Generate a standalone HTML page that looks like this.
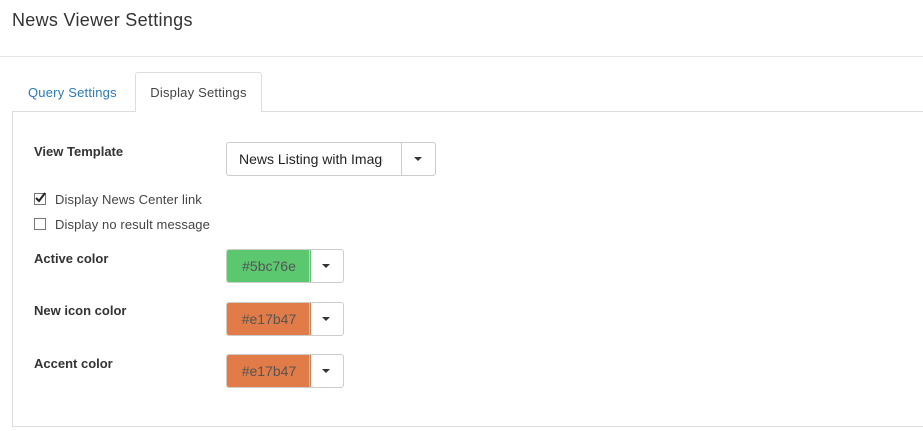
<!DOCTYPE html>
<html><head><style>
body{margin:0;width:923px;height:431px;background:#fff;font-family:"Liberation Sans",sans-serif;color:#333;position:relative;overflow:hidden}
.a{position:absolute}
.t{left:12px;top:10px;font-size:18px;color:#333;letter-spacing:0.3px}
.hl{left:0;top:56px;width:923px;height:1px;background:#e5e5e5}
.tab1{left:28px;top:85px;font-size:13px;color:#2a7ab8;letter-spacing:0.2px}
.tab2{left:135px;top:72px;width:127px;height:40px;border:1px solid #ddd;border-bottom:none;border-radius:3px 3px 0 0;background:#fff;font-size:13px;color:#444;text-align:center;line-height:40px;box-sizing:border-box;z-index:2;letter-spacing:0.2px}
.box{left:12px;top:111px;width:930px;height:316px;border:1px solid #ddd;box-sizing:border-box}
.lb{left:34px;font-size:13px;font-weight:bold;color:#333}
.sel{left:226px;top:142px;width:210px;height:34px;border:1px solid #ccc;border-radius:3px;box-sizing:border-box;font-size:14px;color:#222}
.sel span{position:absolute;left:12px;top:8px;width:144px;overflow:hidden;white-space:nowrap}
.dd{position:absolute;right:0;top:0;width:33px;height:32px;border-left:1px solid #ccc}
.car{position:absolute;left:12px;top:14px;width:0;height:0;border-left:4px solid transparent;border-right:4px solid transparent;border-top:4px solid #333}
.cb{left:34px;width:12px;height:12px;border:1px solid #777;box-sizing:border-box}
.ct{left:55px;font-size:13px;color:#444;letter-spacing:0.1px}
.col{left:226px;width:118px;height:34px;border:1px solid #ccc;border-radius:3px;box-sizing:border-box;overflow:hidden}
.sw{position:absolute;left:0;top:0;width:84px;height:32px;font-size:14px;color:#555;text-align:center;line-height:32px}
.col .dd{width:33px}
</style></head><body>
<div class="a t">News Viewer Settings</div>
<div class="a hl"></div>
<div class="a tab1">Query Settings</div>
<div class="a tab2">Display Settings</div>
<div class="a box"></div>
<div class="a lb" style="top:144px">View Template</div>
<div class="a sel"><span>News Listing with Images</span><div class="dd"><div class="car"></div></div></div>
<div class="a cb" style="top:193px"><svg width="12" height="12" style="position:absolute;left:-1px;top:-2px"><path d="M2 6l3 3 6-8" stroke="#222" stroke-width="2" fill="none"/></svg></div>
<div class="a ct" style="top:192px">Display News Center link</div>
<div class="a cb" style="top:218px"></div>
<div class="a ct" style="top:217px">Display no result message</div>
<div class="a lb" style="top:251px">Active color</div>
<div class="a col" style="top:249px"><div class="sw" style="background:#5bc76e">#5bc76e</div><div class="dd"><div class="car"></div></div></div>
<div class="a lb" style="top:303px">New icon color</div>
<div class="a col" style="top:302px"><div class="sw" style="background:#e17b47">#e17b47</div><div class="dd"><div class="car"></div></div></div>
<div class="a lb" style="top:356px">Accent color</div>
<div class="a col" style="top:354px"><div class="sw" style="background:#e17b47">#e17b47</div><div class="dd"><div class="car"></div></div></div>
</body></html>
